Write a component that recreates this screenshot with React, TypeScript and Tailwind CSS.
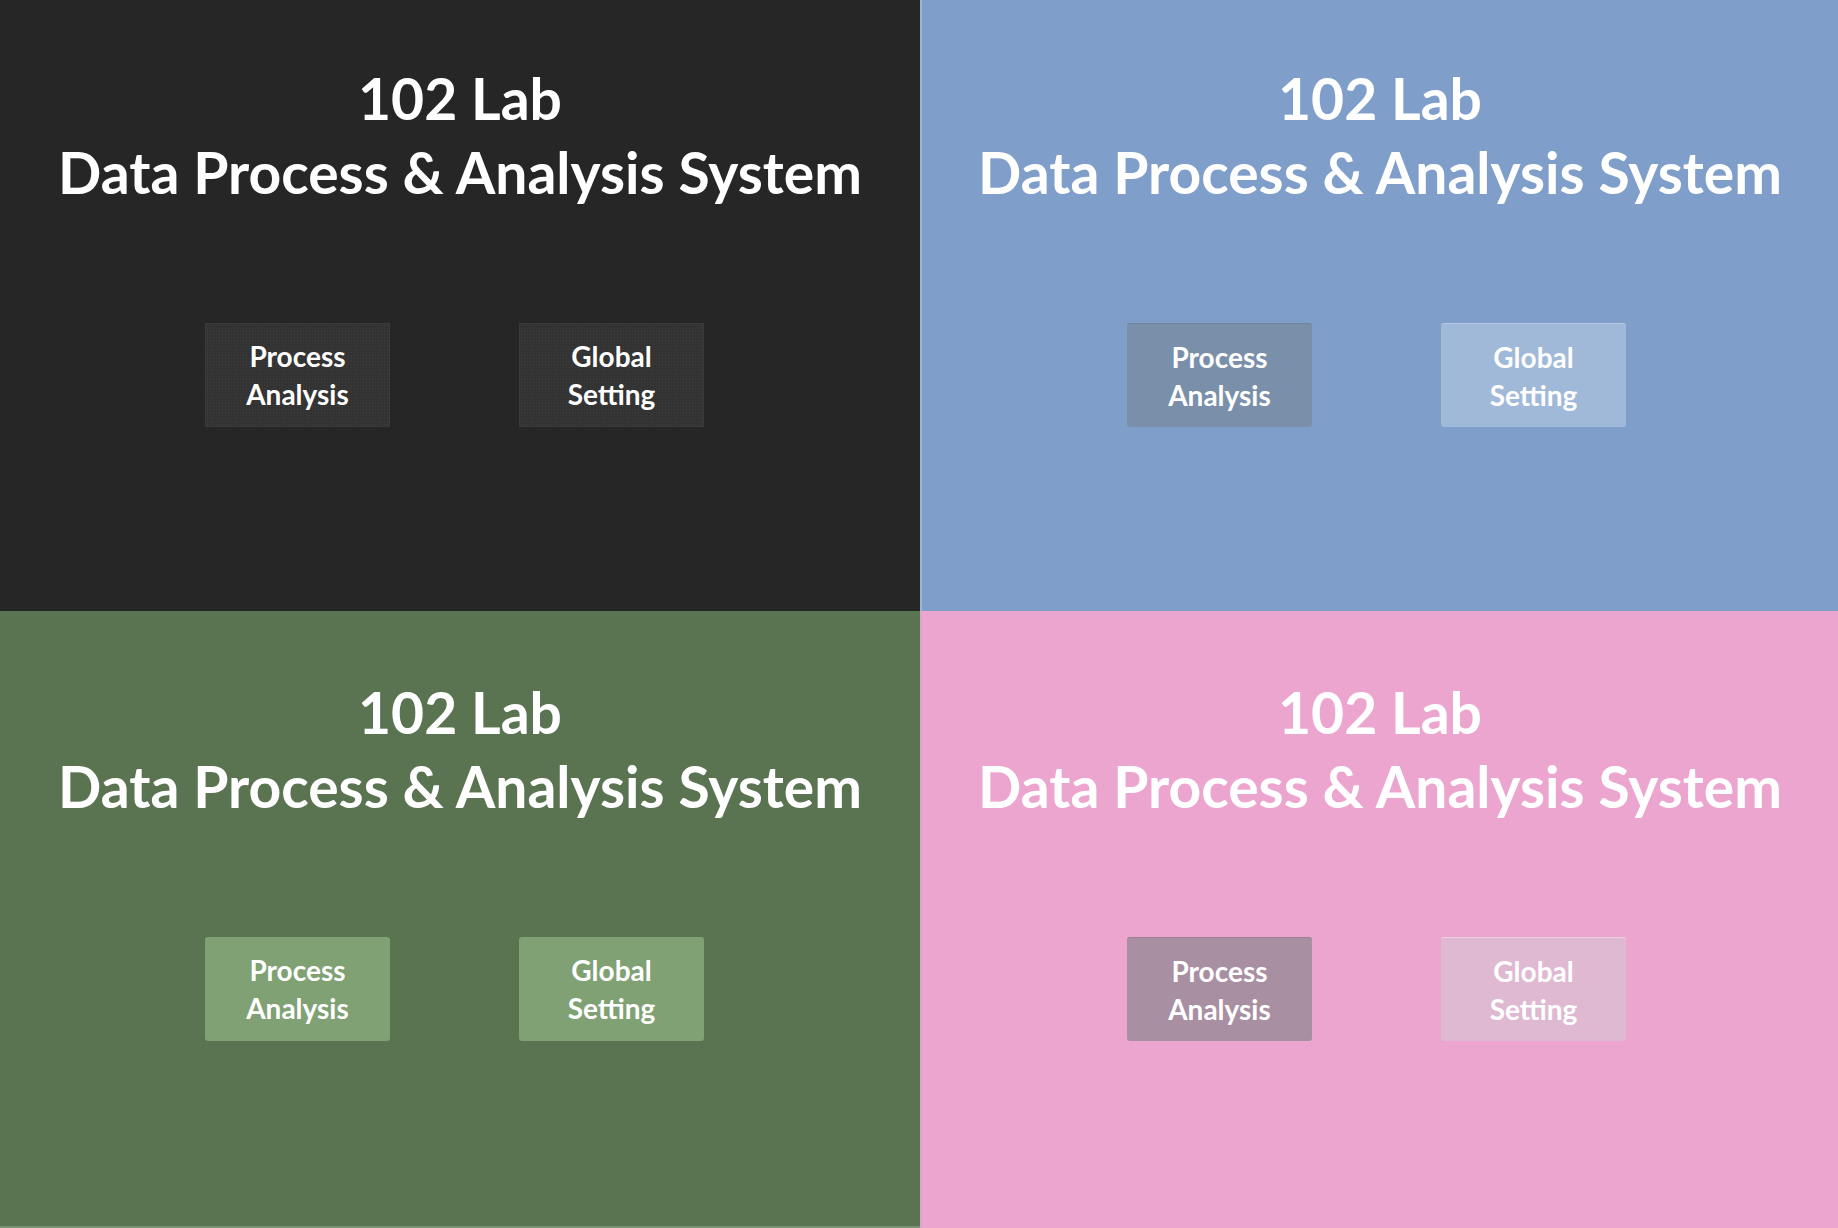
import * as React from "react";

type Theme = {
  panel: string;
  top: string;
  primary: string;
  secondary: string;
};

const THEMES: Theme[] = [
  {
    panel: "bg-[#262626]",
    top: "pt-[61px]",
    primary:
      "bg-[#333333] bg-[radial-gradient(#3d3d3d_1px,transparent_1px)] bg-[length:3px_3px] border border-[#3a3a3a]",
    secondary:
      "bg-[#333333] bg-[radial-gradient(#3d3d3d_1px,transparent_1px)] bg-[length:3px_3px] border border-[#3a3a3a]",
  },
  {
    panel: "bg-[#7f9ec9] border-l-2 border-[#9cb5d8]",
    top: "pt-[61px]",
    primary: "bg-[#7a90aa] border-t border-[#6f849c] rounded-[3px]",
    secondary: "bg-[#a0b9d9] border-t border-[#b3c8e2] rounded-[3px]",
  },
  {
    panel: "bg-[#5a7351] border-b-2 border-[#7d9274]",
    top: "pt-[64px]",
    primary: "bg-[#7fa174] rounded-[3px]",
    secondary: "bg-[#7fa174] rounded-[3px]",
  },
  {
    panel: "bg-[#eca5ce] border-l-2 border-[#d9a9c6]",
    top: "pt-[64px]",
    primary: "bg-[#a98fa2] border-t border-[#9a8093] rounded-[3px]",
    secondary: "bg-[#dfb9d2] border-t border-[#ecd0e1] rounded-[3px]",
  },
];

function MenuButton({ label, className }: { label: [string, string]; className: string }): React.ReactElement {
  return (
    <button
      type="button"
      className={`flex h-[104px] w-[185px] cursor-default flex-col items-center justify-center text-[28px] font-bold leading-[38px] text-white ${className}`}
    >
      <span>{label[0]}</span>
      <span>{label[1]}</span>
    </button>
  );
}

function Panel({ theme }: { theme: Theme }): React.ReactElement {
  return (
    <div className={`flex flex-col ${theme.panel} ${theme.top}`}>
      {/* Title */}
      <div className="text-center text-[57px] font-bold leading-[74px] text-white">
        <div>102 Lab</div>
        <div>Data Process &amp; Analysis System</div>
      </div>

      {/* Buttons */}
      <div className="mt-[114px] flex gap-[129px] pl-[205px]">
        <MenuButton label={["Process", "Analysis"]} className={theme.primary} />
        <MenuButton label={["Global", "Setting"]} className={theme.secondary} />
      </div>
    </div>
  );
}

export default function App(): React.ReactElement {
  return (
    <div
      className="grid h-[1228px] w-[1838px] grid-cols-[920px_918px] grid-rows-[611px_617px] overflow-hidden"
      style={{ fontFamily: "Lato, 'Open Sans', sans-serif" }}
    >
      {THEMES.map((t, i) => (
        <Panel key={i} theme={t} />
      ))}
    </div>
  );
}
